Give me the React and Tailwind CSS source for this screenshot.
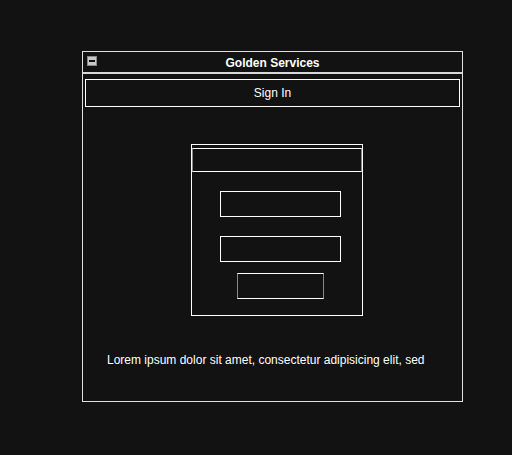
import React from 'react';

// Sketchy sign-in window mockup.
export default function App() {
  return (
    <div
      className="w-[512px] h-[455px] bg-[#121212] text-white relative"
      style={{ fontFamily: '"Liberation Sans", Arial, sans-serif' }}
    >
      <div className="absolute left-[82px] top-[51px] w-[381px] h-[351px] border border-[#e0e0e0] flex flex-col">
        {/* title bar */}
        <div className="h-[22px] border-b-2 border-[#d8d8d8] flex items-center relative">
          <div className="absolute left-[4px] top-[4px] w-[10px] h-[10px] bg-[#c8c8c8] border border-[#888] flex items-center justify-center">
            <div className="w-[6px] h-[2px] bg-[#111]" />
          </div>
          <div className="flex-1 text-center text-[12px] font-bold leading-none pt-[1px]">
            Golden Services
          </div>
        </div>
        {/* sign-in header */}
        <div className="mx-[2px] mt-[5px] h-[28px] border border-white flex items-center justify-center text-[12px]">
          Sign In
        </div>
        {/* form panel */}
        <div className="ml-[108px] mt-[37px] w-[172px] h-[172px] border border-white flex flex-col items-start">
          <div className="mt-[3px] w-[170px] h-[24px] border border-white border-x-[#888]" />
          <div className="ml-[28px] mt-[19px] w-[121px] h-[26px] border border-white" />
          <div className="ml-[28px] mt-[19px] w-[121px] h-[26px] border border-white" />
          <div className="ml-[45px] mt-[11px] w-[87px] h-[26px] border border-white border-x-[#888]" />
        </div>
        <div className="ml-[24px] mt-[38px] text-[12px] leading-none">
          Lorem ipsum dolor sit amet, consectetur adipisicing elit, sed
        </div>
      </div>
    </div>
  );
}
